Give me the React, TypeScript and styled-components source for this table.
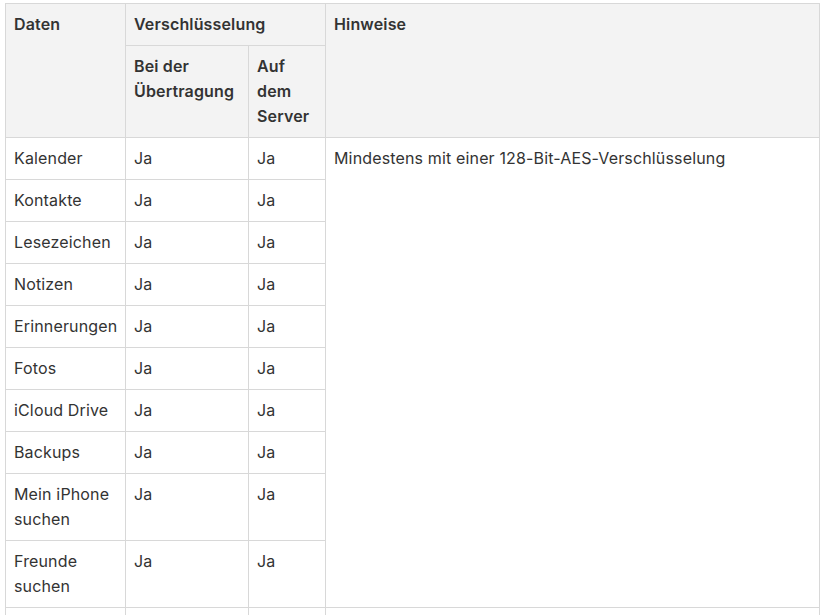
import styled, { createGlobalStyle } from "styled-components";

const GlobalStyle = createGlobalStyle`
  body {
    margin: 0;
    background: #ffffff;
    font-family: Inter, "Noto Sans", "Liberation Sans", sans-serif;
    color: #333333;
  }
`;

const Wrapper = styled.div`
  padding: 3px 7px 0 5px;
`;

const Table = styled.table`
  width: 815px;
  border-collapse: collapse;
  table-layout: fixed;
  font-size: 16px;
  line-height: 25px;
  letter-spacing: 0.15px;
`;

const HeadCell = styled.th`
  background-color: #f3f3f3;
  border: 1px solid #d8d8d8;
  padding: 8px 8px;
  text-align: left;
  vertical-align: top;
  font-weight: 600;
  color: #333333;
`;

const Cell = styled.td`
  border: 1px solid #d8d8d8;
  padding: 8px 8px;
  text-align: left;
  vertical-align: top;
  font-weight: 400;
  color: #333333;
`;

const rows: { name: string; transfer: string; server: string }[] = [
  { name: "Kalender", transfer: "Ja", server: "Ja" },
  { name: "Kontakte", transfer: "Ja", server: "Ja" },
  { name: "Lesezeichen", transfer: "Ja", server: "Ja" },
  { name: "Notizen", transfer: "Ja", server: "Ja" },
  { name: "Erinnerungen", transfer: "Ja", server: "Ja" },
  { name: "Fotos", transfer: "Ja", server: "Ja" },
  { name: "iCloud Drive", transfer: "Ja", server: "Ja" },
  { name: "Backups", transfer: "Ja", server: "Ja" },
  { name: "Mein iPhone suchen", transfer: "Ja", server: "Ja" },
  { name: "Freunde suchen", transfer: "Ja", server: "Ja" },
];

export default function App() {
  return (
    <>
      <GlobalStyle />
      <Wrapper>
        <Table>
          <colgroup>
            <col style={{ width: 120 }} />
            <col style={{ width: 123 }} />
            <col style={{ width: 77 }} />
            <col />
          </colgroup>
          <thead>
            <tr>
              <HeadCell rowSpan={2}>Daten</HeadCell>
              <HeadCell colSpan={2}>Verschlüsselung</HeadCell>
              <HeadCell rowSpan={2}>Hinweise</HeadCell>
            </tr>
            <tr>
              <HeadCell>Bei der Übertragung</HeadCell>
              <HeadCell>Auf dem Server</HeadCell>
            </tr>
          </thead>
          <tbody>
            {rows.map((row, i) => (
              <tr key={row.name}>
                <Cell>{row.name}</Cell>
                <Cell>{row.transfer}</Cell>
                <Cell>{row.server}</Cell>
                {i === 0 && (
                  <Cell rowSpan={rows.length}>
                    Mindestens mit einer 128-Bit-AES-Verschlüsselung
                  </Cell>
                )}
              </tr>
            ))}
            <tr>
              <Cell>Nachrichten</Cell>
              <Cell>Ja</Cell>
              <Cell>Ja</Cell>
              <Cell>Ende-zu-Ende-Verschlüsselung</Cell>
            </tr>
          </tbody>
        </Table>
      </Wrapper>
    </>
  );
}
